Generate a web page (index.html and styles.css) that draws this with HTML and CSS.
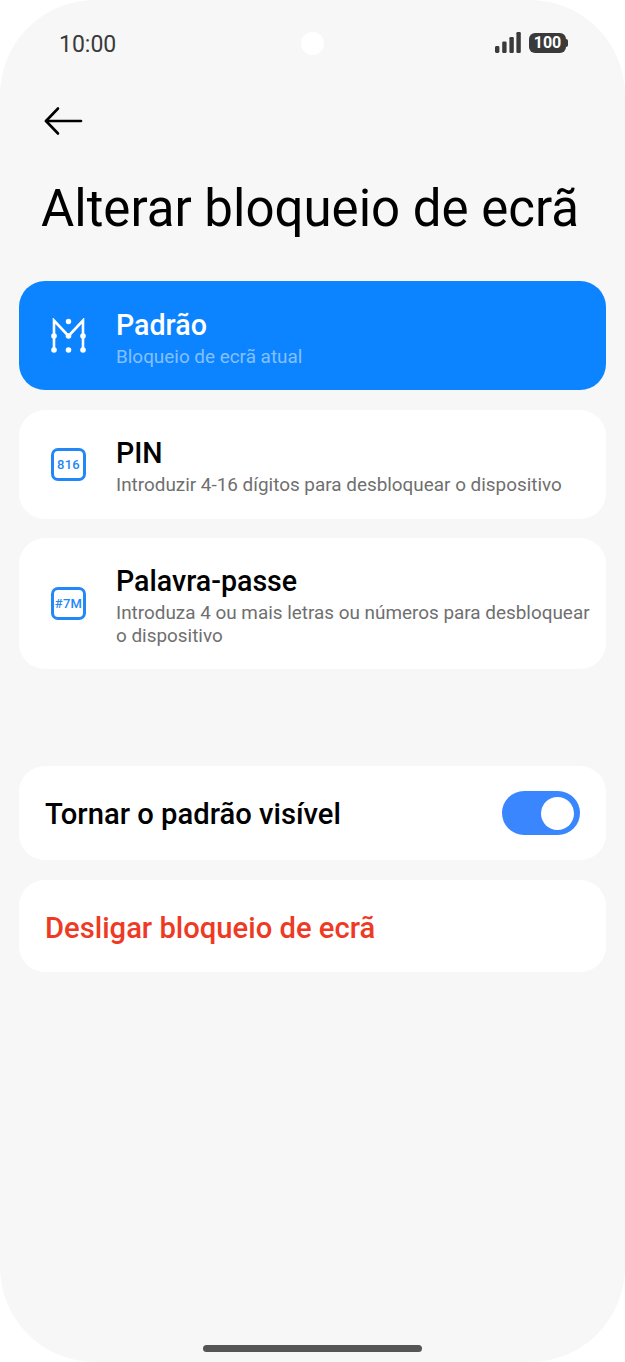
FILE: index.html
```html
<!DOCTYPE html>
<html lang="pt">

<head>
    <meta charset="UTF-8">
    <title>Alterar bloqueio de ecrã</title>
    <link rel="stylesheet" href="styles.css">
</head>

<body>
    <div class="phone">
        <div class="status-bar">
            <span class="time">10:00</span>
            <span class="camera"></span>
            <div class="status-icons">
                <svg class="signal" width="26" height="21" viewBox="0 0 26 21">
                    <rect x="0" y="14" width="4.400" height="7" rx="1.400" />
                    <rect x="7.200" y="9.500" width="4.400" height="11.500" rx="1.200" />
                    <rect x="14.400" y="5" width="4.400" height="16" rx="1.200" />
                    <rect x="21.400" y="0" width="4.400" height="21" rx="1.200" />
                </svg>
                <div class="battery"><span class="battery-level">100</span></div>
            </div>
        </div>

        <div class="back-row">
            <svg width="40" height="30" viewBox="0 0 40 30" fill="none" stroke="#000" stroke-width="2.600"
                stroke-linecap="round" stroke-linejoin="round">
                <path d="M2 15H37" />
                <path d="M14 2.500L2 15L14 27.500" />
            </svg>
        </div>

        <h1 class="page-title">Alterar bloqueio de ecrã</h1>

        <div class="option-list">
            <div class="card option selected">
                <svg class="option-icon" width="35" height="35" viewBox="0 0 35 35" fill="none" stroke="#fff"
                    stroke-width="2.600" stroke-linejoin="miter">
                    <path d="M3 32V2.500L17.500 18L32 2.500V32" />
                    <g fill="#fff" stroke="none">
                        <circle cx="17.500" cy="3.500" r="2.700" />
                        <circle cx="3" cy="18" r="2.800" />
                        <circle cx="17.500" cy="18" r="2.800" />
                        <circle cx="32" cy="18" r="2.800" />
                        <circle cx="3" cy="32" r="2.800" />
                        <circle cx="17.500" cy="32" r="2.800" />
                        <circle cx="32" cy="32" r="2.800" />
                    </g>
                </svg>
                <div class="option-text">
                    <div class="option-title">Padrão</div>
                    <div class="option-sub">Bloqueio de ecrã atual</div>
                </div>
            </div>

            <div class="card option">
                <div class="option-icon key-icon">816</div>
                <div class="option-text">
                    <div class="option-title">PIN</div>
                    <div class="option-sub">Introduzir 4-16 dígitos para desbloquear o dispositivo</div>
                </div>
            </div>

            <div class="card option option-tall">
                <div class="option-icon key-icon">#7M</div>
                <div class="option-text">
                    <div class="option-title">Palavra-passe</div>
                    <div class="option-sub">Introduza 4 ou mais letras ou números para desbloquear o dispositivo</div>
                </div>
            </div>
        </div>

        <div class="card setting-row">
            <span class="setting-label">Tornar o padrão visível</span>
            <span class="toggle"><span class="knob"></span></span>
        </div>

        <div class="card danger-row">Desligar bloqueio de ecrã</div>

        <div class="home-bar"></div>
    </div>
</body>

</html>
```

FILE: styles.css
```css
* {
    box-sizing: border-box;
}

html,
body {
    margin: 0;
    background: #fff;
}

body {
    font-family: Roboto, "Noto Sans", sans-serif;
}

.phone {
    display: flex;
    flex-direction: column;
    width: 625px;
    height: 1362px;
    padding: 0 19px;
    background: #f7f7f7;
    border-radius: 95px;
    overflow: hidden;
}

.status-bar {
    display: flex;
    align-items: center;
    justify-content: space-between;
    height: 32px;
    margin-top: 28px;
    padding: 0 40px 0 40px;
    position: relative;
}

.time {
    font-size: 23px;
    color: #3a3a3a;
}

/* punch hole */
.camera {
    position: absolute;
    left: 282px;
    top: 4px;
    width: 23px;
    height: 23px;
    background: #fff;
    border-radius: 50%;
}

.status-icons {
    display: flex;
    align-items: center;
    gap: 8px;
    margin-bottom: 3px;
}

.signal {
    fill: #3a3a3a;
}

.battery {
    position: relative;
    display: flex;
    align-items: center;
    justify-content: center;
    width: 37px;
    height: 20px;
    background: #3a3a3a;
    border-radius: 6px;
}

.battery::after {
    content: "";
    position: absolute;
    right: -2px;
    top: 6px;
    width: 2px;
    height: 8px;
    background: #3a3a3a;
    border-radius: 0 2px 2px 0;
}

.battery-level {
    font-size: 16px;
    font-weight: 700;
    color: #fff;
}

.back-row {
    height: 30px;
    margin-top: 46px;
    padding-left: 25px;
}

.back-row svg {
    display: block;
}

.page-title {
    margin: 43px 0 0 22px;
    font-size: 51px;
    line-height: 60px;
    font-weight: 400;
    color: #000;
    white-space: nowrap;
}

.card {
    background: #fff;
    border-radius: 26px;
}

.option-list {
    display: flex;
    flex-direction: column;
    gap: 19.5px;
    margin-top: 42px;
}

.option {
    display: flex;
    align-items: flex-start;
    height: 109px;
    padding: 26.500px 10px 0 32px;
    gap: 30px;
}

.option-tall {
    height: 131px;
    padding-top: 25.500px;
}

.option.selected {
    background: #0d84ff;
}

.option-icon {
    flex: none;
    width: 35px;
    height: 33px;
    margin-top: 11.500px;
}

svg.option-icon {
    height: 35px;
    margin-top: 10.500px;
}

.option-tall .option-icon {
    margin-top: 23.500px;
}

.key-icon {
    display: flex;
    align-items: center;
    justify-content: center;
    border: 3px solid #2388f5;
    border-radius: 7px;
    font-size: 13px;
    font-weight: 500;
    letter-spacing: 0.3px;
    color: #2388f5;
}

.option-text {
    flex: 1;
    min-width: 0;
}

.option-title {
    font-size: 28.600px;
    line-height: 34px;
    font-weight: 500;
    color: #000;
}

.option-sub {
    margin-top: 3px;
    font-size: 18.900px;
    line-height: 23px;
    color: #6f6f6f;
}

.selected .option-title {
    color: #fff;
}

.selected .option-sub {
    color: #84c0ff;
}

.setting-row {
    display: flex;
    align-items: center;
    justify-content: space-between;
    height: 94px;
    margin-top: 97px;
    padding: 0 26px;
}

.setting-label {
    padding-top: 2px;
    font-size: 29.200px;
    font-weight: 500;
    color: #000;
}

.toggle {
    display: flex;
    align-items: center;
    justify-content: flex-end;
    width: 78px;
    height: 44px;
    padding-right: 6px;
    background: #3a86ff;
    border-radius: 22px;
}

.knob {
    width: 33px;
    height: 33px;
    background: #fff;
    border-radius: 50%;
}

.danger-row {
    display: flex;
    align-items: center;
    height: 92px;
    margin-top: 20px;
    padding: 3px 26px 0;
    font-size: 29.200px;
    font-weight: 500;
    color: #ee3a24;
}

.home-bar {
    align-self: center;
    width: 219px;
    height: 7px;
    margin-top: auto;
    margin-bottom: 10px;
    background: #555;
    border-radius: 4px;
}
```
